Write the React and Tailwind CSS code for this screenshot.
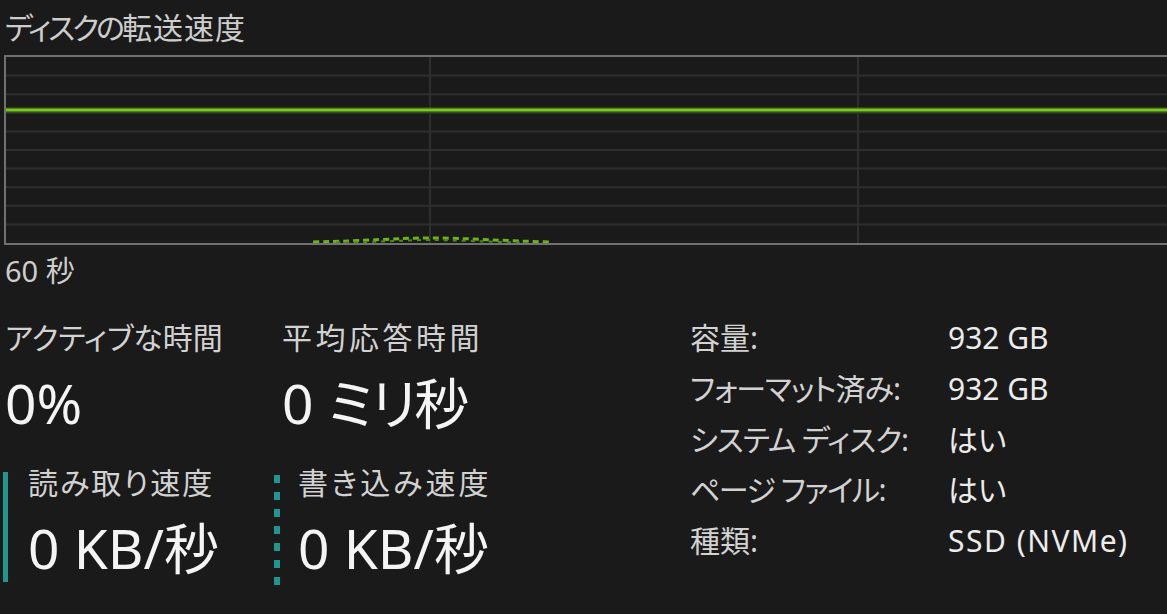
import React from "react";

function Chart() {
  const hLines = [1, 2, 3, 4, 5, 6, 7, 8, 9].map((i) => i * 18.6);
  return (
    <div className="ml-[-1px] mt-[7px] h-[190px] w-[1300px] border-l-2 border-y-2 border-[#717171]">
      <svg width="1298" height="186" className="block">
        {hLines.map((y) => (
          <line key={y} x1="0" x2="1298" y1={y} y2={y} stroke="#2e2e2e" strokeWidth="2" />
        ))}
        <line x1="424" x2="424" y1="0" y2="186" stroke="#2e2e2e" strokeWidth="2" />
        <line x1="852" x2="852" y1="0" y2="186" stroke="#2e2e2e" strokeWidth="2" />
        <line x1="0" x2="1298" y1="53" y2="53" stroke="#3d6a14" strokeWidth="5" />
        <line x1="0" x2="1298" y1="53" y2="53" stroke="#7ac51f" strokeWidth="2.5" />
        <path
          d="M307 185 C 360 184, 390 181, 424 181 C 460 181, 500 184, 544 185"
          fill="none"
          stroke="#6cb31a"
          strokeWidth="3"
          strokeDasharray="6 4"
        />
        <path
          d="M330 185.5 C 380 185, 400 183, 424 183 C 450 183, 480 185, 520 185.5"
          fill="none"
          stroke="#4f8a14"
          strokeWidth="2"
          strokeDasharray="4 5"
        />
      </svg>
    </div>
  );
}

function Stat({ label, value, labelClass = "" }) {
  return (
    <div>
      <div className={"text-[30px] leading-[40px] text-[#d2d2d2] " + labelClass}>{label}</div>
      <div className="mt-[15px] text-[55px] leading-[60px] text-[#f4f4f4]">{value}</div>
    </div>
  );
}

function DottedBar() {
  return (
    <div className="mt-[12px] flex w-[6px] flex-col gap-[9px]">
      {[0, 1, 2, 3, 4, 5, 6].map((i) => (
        <div key={i} className="h-[8px] w-[6px] bg-[#1f9690]" />
      ))}
    </div>
  );
}

export default function App() {
  const rows = [
    ["容量:", "932 GB", "", ""],
    ["フォーマット済み:", "932 GB", "tracking-[-1px]", ""],
    ["システム ディスク:", "はい", "tracking-[-1px]", ""],
    ["ページ ファイル:", "はい", "tracking-[-1.5px]", ""],
    ["種類:", "SSD (NVMe)", "", "tracking-[1.5px]"],
  ];
  return (
    <div className="h-[614px] w-[1167px] overflow-hidden bg-[#1a1a1a] pl-[5px] font-['Noto_Sans','Noto_Sans_CJK_JP',sans-serif] [font-feature-settings:'palt']">
      <div className="pt-[8px] text-[30px] leading-[40px] text-[#cdcdcd]">
        <span className="tracking-[-3px]">ディスクの</span>
        <span className="tracking-[1px]">転送速度</span>
      </div>
      <Chart />
      <div className="mt-[6px] text-[29px] leading-[40px] text-[#cdcdcd]">60 秒</div>
      <div className="flex">
        <div className="w-[685px] pt-[27px]">
          <div className="flex">
            <div className="w-[277px]">
              <Stat label="アクティブな時間" value="0%" />
            </div>
            <Stat
              label="平均応答時間"
              labelClass="tracking-[3.5px]"
              value={
                <>
                  0 <span className="tracking-[-2px]">ミリ</span>秒
                </>
              }
            />
          </div>
          <div className="mt-[30px] ml-[-2px] flex">
            <div className="flex w-[271px]">
              <div className="mt-[9px] mb-[3px] w-[5px] bg-[#1f9690]" />
              <div className="ml-[20px]">
                <Stat label="読み取り速度" labelClass="tracking-[2px]" value="0 KB/秒" />
              </div>
            </div>
            <div className="flex">
              <DottedBar />
              <div className="ml-[18px]">
                <Stat label="書き込み速度" labelClass="tracking-[3px]" value="0 KB/秒" />
              </div>
            </div>
          </div>
        </div>
        <div className="pt-[22px]">
          {rows.map(([k, v, kc, vc]) => (
            <div key={k} className="flex text-[30px] leading-[50.75px]">
              <div className={"w-[258px] text-[#d2d2d2] " + kc}>{k}</div>
              <div className={"text-[#ececec] " + vc}>{v}</div>
            </div>
          ))}
        </div>
      </div>
    </div>
  );
}
